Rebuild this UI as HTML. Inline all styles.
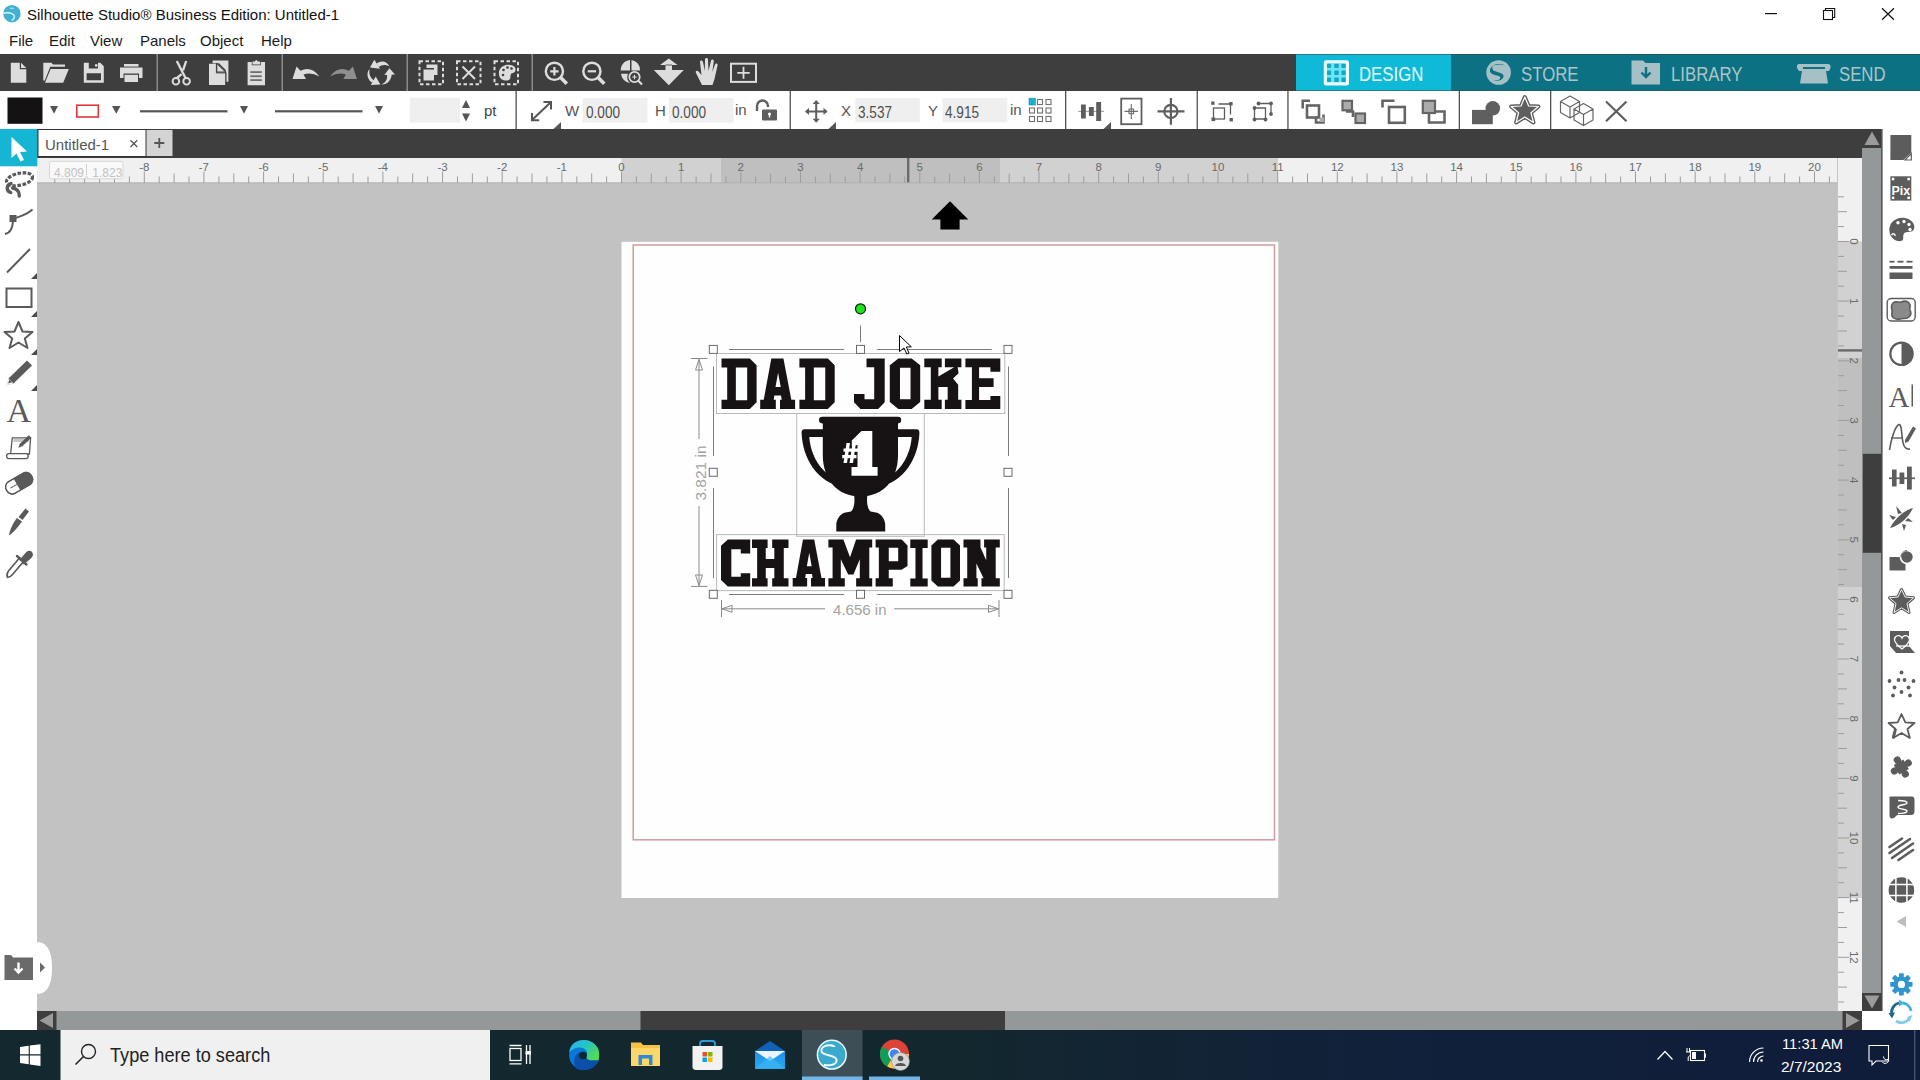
<!DOCTYPE html>
<html><head><meta charset="utf-8">
<style>
*{margin:0;padding:0;box-sizing:border-box}
html,body{width:1920px;height:1080px;overflow:hidden;background:#fff;font-family:"Liberation Sans",sans-serif}
.a{position:absolute}
.t{position:absolute;white-space:pre;line-height:1;transform-origin:0 0}
#tb1{left:0;top:54px;width:1920px;height:37px;background:#3d3e3d}
#tabs{left:37px;top:129px;width:1845px;height:29px;background:#3d3e3d}
#ruler{left:37px;top:158px;width:1801px;height:25px;background:#f0f0f0}
#canvas{left:37px;top:183px;width:1801px;height:828px;background:#c1c2c1}
#vruler{left:1837px;top:158px;width:25px;height:853px;background:#f0f0f0}
#vscroll{left:1862px;top:148px;width:19px;height:845px;background:#959898}
#hscroll{left:37px;top:1011px;width:1825px;height:19px;background:#959898}
#taskbar{left:0;top:1030px;width:1920px;height:50px;background:linear-gradient(90deg,#13282f 0%,#13272f 50%,#11213a 72%,#0f1c3a 100%)}
.fld{position:absolute;background:#efefef}
.menu{font-size:15px;color:#1a1a1a;top:33px}
.fv{font-size:16px;color:#505050;transform:scaleX(0.85)}
.lab{font-size:15px;color:#555}
</style></head><body>
<!-- title -->
<div class="t" style="left:27px;top:7px;font-size:15px;color:#111">Silhouette Studio® Business Edition: Untitled-1</div>
<div class="t menu" style="left:9px">File</div>
<div class="t menu" style="left:49px">Edit</div>
<div class="t menu" style="left:90px">View</div>
<div class="t menu" style="left:140px">Panels</div>
<div class="t menu" style="left:200px">Object</div>
<div class="t menu" style="left:261px">Help</div>
<div id="tb1" class="a"></div>
<div id="tabs" class="a"></div>
<div id="ruler" class="a"></div>
<div id="canvas" class="a"></div>
<div id="vruler" class="a"></div>
<div class="a" style="left:1862px;top:129px;width:20px;height:882px;background:#3d3e3d"></div>
<div id="vscroll" class="a"></div>
<div id="hscroll" class="a"></div>
<div id="taskbar" class="a"></div>
<svg class="a" style="left:0;top:0" width="1920" height="1080" viewBox="0 0 1920 1080">
<!-- title logo -->
<circle cx="11.9" cy="13.7" r="8.7" fill="#43b0d0"/>
<path d="M3.6,13.3 C6,12.3 10.5,12.6 13.2,14.3 C15.2,15.6 14.6,18.6 12.2,20.2" fill="none" stroke="#c8f6ff" stroke-width="1.5" stroke-linecap="round"/>
<path d="M10.5,8.4 C11.5,8 12.5,8.1 13.2,8.6" fill="none" stroke="#9be6f8" stroke-width="1.2" stroke-linecap="round"/>
<!-- window controls -->
<rect x="1765" y="13" width="12" height="1.2" fill="#111"/>
<rect x="1823.5" y="10.5" width="9" height="9" fill="none" stroke="#111" stroke-width="1.1"/>
<path d="M1825.5,10.5 V8.5 H1834.7 V17.5 H1832.5" fill="none" stroke="#111" stroke-width="1.1"/>
<path d="M1882,8.2 L1894,19.8 M1894,8.2 L1882,19.8" stroke="#111" stroke-width="1.2"/>
<!-- toolbar1 separators -->
<g fill="#8a8b8a">
<rect x="156.5" y="54" width="1.5" height="37"/>
<rect x="281.5" y="54" width="1.5" height="37"/>
<rect x="406.5" y="54" width="1.5" height="37"/>
<rect x="531.5" y="54" width="1.5" height="37"/>
</g>
<!-- toolbar1 icons -->
<g fill="#dcdddc">
<path d="M10.8,62.8 H19.8 V69.2 H26.3 V82.8 H10.8 Z"/>
<path d="M21,62.8 L26.3,68 H21 Z"/>
<path d="M43.3,62.8 H51.5 L53,64.6 H65 V66.8 H50.2 L44.8,80.5 H43.3 Z"/>
<path d="M50.6,69 H68.8 L63.2,82.8 H45 Z"/>
<path d="M83.8,62.8 H88.8 V68.5 H98 V62.8 H100.3 L103.8,66.3 V82.8 H83.8 Z M86.6,73.2 V80.3 H101 V73.2 Z" fill-rule="evenodd"/>
<circle cx="96.2" cy="65.4" r="1.3"/>
<rect x="124" y="64" width="14.5" height="2.6"/>
<path d="M120,67.4 H142.5 V78 H139 V73.5 H123.5 V78 H120 Z"/>
<rect x="124.5" y="74.8" width="13.5" height="7.2"/>
<!-- cut -->
<path d="M176.8,61 L185.5,78" stroke="#dcdddc" stroke-width="2.3" fill="none"/>
<path d="M186.2,61 L183,70.3 M181.6,74.2 L177,78" stroke="#dcdddc" stroke-width="2.3" fill="none"/>
<circle cx="175.9" cy="81.3" r="3.3" fill="none" stroke="#dcdddc" stroke-width="1.9"/>
<circle cx="186.6" cy="81.3" r="3.3" fill="none" stroke="#dcdddc" stroke-width="1.9"/>
<!-- copy -->
<path d="M212.6,60.4 H228.4 V81.7 H225.8 V70 L219,63.2 H212.6 Z"/>
<path d="M209,63.7 H216.4 V72.4 H225.3 V85 H209 Z"/>
<path d="M217.3,63.7 L225.3,71.6 H217.3 Z"/>
<path d="M216.4,63.2 V72.9 H226 M216.4,63.2 L226,72.5 V85.5" stroke="#3d3e3d" stroke-width="1" fill="none"/>
<!-- paste -->
<path d="M247.6,62 H251.8 V65.2 H260.8 V62 H265 V85.2 H247.6 Z"/>
<path d="M252.5,61.5 H254.8 Q256.3,58.5 257.8,61.5 H260.1 V64.5 H252.5 Z"/>
<g fill="#6e6f6e"><rect x="250.3" y="71.2" width="11.5" height="1.8"/><rect x="250.3" y="75.3" width="11.5" height="1.8"/><rect x="250.3" y="79.2" width="11.5" height="1.8"/></g>
<!-- undo -->
<path d="M292.5,79 L296.5,66.5 L300.5,70.8 Q311,65.5 319.4,76.5 Q311,71.5 303.5,74.5 L306,79 Z"/>
</g>
<path d="M356.9,79 L352.9,66.5 L348.9,70.8 Q338.4,65.5 330,76.5 Q338.4,71.5 345.9,74.5 L343.4,79 Z" fill="#8e8f8e"/>
<!-- rotate -->
<g fill="#dcdddc">
<path d="M374.3,59.8 L370,67.6 L380,68.8 Z"/>
<path d="M376.5,63.5 C381,60.5 386.5,60.5 389.5,66.5 C386,64.2 381.5,64.5 378.8,67 Z"/>
<path d="M389.4,68.2 L384.3,75 L395,74.6 Z"/>
<path d="M386.8,74 C388,79 386,82.5 381.5,84.4 C385,84.8 391,82.5 391.8,74 Z"/>
<path d="M380.4,84.4 L370.8,84.9 L375.7,76.4 Z"/>
<path d="M374.2,80.5 C370.2,78 368.6,73.5 369.6,69 C366.6,71.5 366.4,78.5 371.8,82.6 Z"/>
</g>
<!-- group dashed boxes -->
<g fill="none" stroke="#dcdddc" stroke-width="2" stroke-dasharray="3.5,2.5">
<rect x="419.5" y="61.2" width="23.5" height="23"/>
<rect x="457" y="61.2" width="23.5" height="23"/>
<rect x="494.5" y="61.2" width="23.5" height="23"/>
</g>
<g fill="#dcdddc">
<path d="M426.5,64.5 H437.5 V75 H434 V68 H426.5 Z"/>
<rect x="423.5" y="69.5" width="10.5" height="11"/>
</g>
<path d="M462.5,66.5 L475,79 M475,66.5 L462.5,79" stroke="#dcdddc" stroke-width="2"/>
<path d="M499,74.5 C498,66 507,63.5 512.5,65.5 C517,67 516,72.5 513,73 C509.5,73.5 511,77 510,79 C508,82 499.5,81 499,74.5 Z" fill="#dcdddc"/>
<g fill="#3d3e3d"><circle cx="503.5" cy="70" r="1.3"/><circle cx="507.5" cy="67.5" r="1.3"/><circle cx="511.5" cy="68.5" r="1.3"/><circle cx="503" cy="75" r="1.3"/></g>
<!-- zoom in/out -->
<g fill="none" stroke="#dcdddc">
<circle cx="554.4" cy="71.3" r="8.6" stroke-width="2.4"/>
<path d="M560.6,77.5 L566.8,83.7" stroke-width="3.6"/>
<path d="M550.2,71.3 H558.6 M554.4,67.1 V75.5" stroke-width="2.2"/>
<circle cx="591.9" cy="71.3" r="8.6" stroke-width="2.4"/>
<path d="M598.1,77.5 L604.3,83.7" stroke-width="3.6"/>
<path d="M587.7,71.3 H596.1" stroke-width="2.2"/>
</g>
<!-- zoom selection -->
<path d="M621,72 A10,10 0 0 1 630,60 V70.5 H621 Z M631.5,60 A10,10 0 0 1 640,70.5 H631.5 Z M621,73.8 H628 A8,8 0 0 0 630,83 A10,10 0 0 1 621,73.8 Z" fill="#dcdddc"/>
<circle cx="634.5" cy="77" r="5.2" fill="none" stroke="#dcdddc" stroke-width="1.8"/>
<path d="M638.3,80.8 L642,84.5" stroke="#dcdddc" stroke-width="2.2"/>
<path d="M632.2,77 H636.8 M634.5,74.7 V79.3" stroke="#dcdddc" stroke-width="1.2"/>
<!-- fit / move arrows -->
<path d="M668.8,58.4 L677.5,65 H672 V70 H683.8 L668.8,85.3 L653.8,70 H665.5 V65 H660 Z" fill="#dcdddc"/>
<path d="M665.5,65 H672" stroke="#3d3e3d" stroke-width="0.8"/>
<!-- hand -->
<path d="M702,85 L696,73 C695,71 697,70 698.5,71.5 L701.5,75 L700,62 C699.8,60 702.5,59.8 703,62 L704.8,71 L705,59.5 C705,57.5 708,57.5 708,59.5 L708.5,71 L711,60.8 C711.5,59 714,59.3 713.8,61.3 L712.3,72 L715,64.5 C715.6,62.8 718,63.3 717.6,65.2 L714.5,79 L712.5,85 Z" fill="#dcdddc"/>
<!-- add rect -->
<rect x="731" y="63.7" width="25" height="18.2" fill="none" stroke="#dcdddc" stroke-width="2"/>
<path d="M737.3,72.8 H749.7 M743.5,66.8 V78.8" stroke="#dcdddc" stroke-width="1.8"/>
<!-- mode tabs -->
<rect x="1296" y="54.5" width="155" height="36" fill="#0fbad8"/>
<rect x="1451" y="54.5" width="469" height="36" fill="#0c7283"/>
<rect x="1323.8" y="60.2" width="25.2" height="25.2" rx="2.5" fill="#effdff"/>
<rect x="1326.8" y="63.2" width="19.2" height="19.2" fill="#6fe6f8"/>
<g fill="#12a8c4">
<rect x="1327" y="63.8" width="4.2" height="4.2" rx="0.8"/><rect x="1334.2" y="63.8" width="4.6" height="4.2" rx="0.8"/><rect x="1341.4" y="63.8" width="4.3" height="4.2" rx="0.8"/>
<rect x="1327" y="70.6" width="4.2" height="4.4" rx="0.8"/><rect x="1334.2" y="70.6" width="4.6" height="4.4" rx="0.8"/><rect x="1341.4" y="70.6" width="4.3" height="4.4" rx="0.8"/>
<rect x="1327" y="77.6" width="4.2" height="4.3" rx="0.8"/><rect x="1334.2" y="77.6" width="4.6" height="4.3" rx="0.8"/><rect x="1341.4" y="77.6" width="4.3" height="4.3" rx="0.8"/>
</g>
<!-- store icon -->
<circle cx="1498.6" cy="72.5" r="12.3" fill="#a7c0c5"/>
<path d="M1505,65.5 C1499,62.5 1491,64.5 1492.5,69 C1493.5,72.5 1502.5,71.8 1503.5,75.5 C1504.3,78.8 1499,82 1493,80.5 C1498.5,80.8 1501,79 1500,77 C1499,75 1491,75.5 1490,71.5 C1489,66 1497,62.5 1505,65.5 Z" fill="#0c7283"/>
<!-- library icon -->
<path d="M1631.5,60.5 H1643 L1645.5,63 H1660 V84.5 H1631.5 Z" fill="#a7c0c5"/>
<path d="M1646,67 V76 M1641.5,72.5 L1646,77 L1650.5,72.5" stroke="#0c7283" stroke-width="2.4" fill="none"/>
<!-- send icon -->
<path d="M1799,64 H1828 Q1831,64 1830.5,68 L1829,71 H1826 L1828,83.5 H1800 L1802,71 H1799 L1797,68 Q1796.5,64 1799,64 Z" fill="#a7c0c5"/>
<rect x="1803" y="67" width="22" height="2" fill="#0c7283"/>
<!-- toolbar2 -->
<rect x="7.5" y="97.5" width="35" height="26.3" fill="#141213"/>
<g fill="#555">
<path d="M50,106 H58 L54,113.8 Z"/>
<path d="M112,106 H120.5 L116.2,113.8 Z"/>
<path d="M240,106 H248 L244,113.8 Z"/>
<path d="M375,106 H383 L379,113.8 Z"/>
<path d="M462,108 H470 L466,100 Z"/>
<path d="M462,113.5 H470 L466,121.5 Z"/>
</g>
<rect x="76.8" y="105.2" width="21.5" height="11.8" fill="none" stroke="#e0373a" stroke-width="1.6"/>
<rect x="140" y="110.2" width="87.5" height="2.2" fill="#555"/>
<rect x="275" y="110.2" width="87.5" height="2.2" fill="#555"/>
<rect x="410" y="97.6" width="50" height="25" fill="#efefef"/>
<g fill="#505050">
<rect x="515.5" y="91" width="1.3" height="38"/>
<rect x="789.6" y="91" width="1.3" height="38"/>
<rect x="1065" y="91" width="1.3" height="38"/>
<rect x="1196.6" y="91" width="1.3" height="38"/>
<rect x="1287.3" y="91" width="1.3" height="38"/>
<rect x="1458.7" y="91" width="1.3" height="38"/>
<rect x="1550" y="91" width="1.3" height="38"/>
</g>
<!-- resize arrow -->
<g stroke="#555" stroke-width="2" fill="none">
<path d="M532.5,119.5 L550.5,102.5"/>
<path d="M532,113 V120.2 H539.2 M543.5,102 H551 V109.5"/>
</g>
<g fill="#555">
<path d="M553.5,129 L561,122 V129 Z"/>
<path d="M828.5,129 L836,122 V129 Z"/>
<path d="M1103.5,129 L1111,122 V129 Z"/>
</g>
<rect x="582.5" y="98" width="65" height="24.6" fill="#efefef"/>
<rect x="668.9" y="98" width="64.7" height="24.6" fill="#efefef"/>
<rect x="855.2" y="98" width="64.6" height="24.2" fill="#efefef"/>
<rect x="942.4" y="98" width="64.9" height="24.2" fill="#efefef"/>
<!-- lock -->
<path d="M757,111 V106 A5.5,5.5 0 0 1 768,106 V107" fill="none" stroke="#5e5e5e" stroke-width="2.4"/>
<rect x="762" y="109.5" width="15" height="11" rx="1" fill="#5e5e5e"/>
<circle cx="769.5" cy="114" r="1.6" fill="#fff"/><rect x="768.9" y="114" width="1.2" height="3.5" fill="#fff"/>
<!-- move -->
<g stroke="#5e5e5e" stroke-width="2" fill="none">
<path d="M806,111.4 H826.5 M816.2,101 V121.8"/>
</g>
<g fill="#5e5e5e">
<path d="M805,111.4 L809,107.8 V115 Z"/><path d="M827.5,111.4 L823.5,107.8 V115 Z"/>
<path d="M816.2,100 L812.6,104 H819.8 Z"/><path d="M816.2,122.8 L812.6,118.8 H819.8 Z"/>
</g>
<!-- 3x3 grid -->
<g fill="none" stroke="#707070" stroke-width="1.1">
<rect x="1037.5" y="99.5" width="5" height="5"/><rect x="1046" y="99.5" width="5" height="5"/>
<rect x="1029.5" y="108" width="5" height="5"/><rect x="1037.5" y="108" width="5" height="5"/><rect x="1046" y="108" width="5" height="5"/>
<rect x="1029.5" y="116.5" width="5" height="5"/><rect x="1037.5" y="116.5" width="5" height="5"/><rect x="1046" y="116.5" width="5" height="5"/>
</g>
<rect x="1029" y="98.2" width="6.3" height="6.8" fill="#1ab0cf" stroke="#0e8aa5" stroke-width="0.6"/>
<!-- align -->
<g fill="#5e5e5e">
<rect x="1078" y="110.8" width="26" height="1.2" fill="#aaa"/>
<rect x="1081" y="104.5" width="4.8" height="14"/>
<rect x="1088.9" y="107" width="4.9" height="9"/>
<rect x="1096.2" y="102" width="4.9" height="19"/>
</g>
<rect x="1121.2" y="98.6" width="20.3" height="25.6" fill="none" stroke="#5e5e5e" stroke-width="1.8"/>
<g stroke="#6e6e6e" stroke-width="1.1" fill="none">
<path d="M1124.5,111.4 H1138 M1131.3,104 V119"/>
<rect x="1129" y="109.1" width="4.6" height="4.6"/>
</g>
<g stroke="#5e5e5e" fill="none">
<circle cx="1170.9" cy="111.4" r="6.6" stroke-width="2.2"/>
<path d="M1157.5,111.4 H1184.5 M1170.9,98 V124.8" stroke-width="2.2"/>
</g>
<!-- transform icons -->
<g fill="none" stroke="#5e5e5e" stroke-width="1.3">
<rect x="1213.5" y="108" width="11" height="11"/>
<path d="M1218.5,104 H1230.5 V114.5"/>
<path d="M1254.5,108 H1265.5 V119 H1254.5 Z"/>
<path d="M1258.5,103.5 H1271 V114"/>
</g>
<g fill="#5e5e5e">
<rect x="1211.2" y="101.5" width="3.3" height="3.3"/><rect x="1229.2" y="102" width="3.4" height="3.4"/><rect x="1211.5" y="117.5" width="3.6" height="3.6"/><rect x="1229.5" y="118" width="3.4" height="3.4"/>
<circle cx="1254.5" cy="108" r="1.9"/><circle cx="1258.5" cy="103.5" r="1.9"/><circle cx="1271" cy="103.5" r="1.9"/><circle cx="1271" cy="114" r="1.9"/><circle cx="1254.5" cy="119.5" r="1.9"/><circle cx="1265.5" cy="119.5" r="1.9"/>
</g>
<!-- arrange icons -->
<g fill="none" stroke="#646464" stroke-width="2.6">
<path d="M1302.7,108.5 V100.8 H1310 M1316,116.5 V122.5 H1323.5 V114.5"/>
<rect x="1307" y="105.5" width="12" height="12"/>
<path d="M1347,110 V104.5 M1353,117 V111.5 H1346"/>
<path d="M1382.5,107.5 V100.8 H1394.5"/>
<rect x="1389" y="107" width="15.8" height="15.8"/>
<path d="M1430.5,111.5 H1444.5 V122.5 H1429 V114"/>
</g>
<g fill="#ababab" stroke="#646464" stroke-width="2.2">
<rect x="1342.5" y="100.8" width="9.5" height="9.5"/>
<rect x="1355.5" y="113.5" width="9.5" height="9.5"/>
<rect x="1422.8" y="100.8" width="12.2" height="12.2"/>
</g>
<rect x="1319.5" y="117.5" width="4.5" height="4.5" fill="#ababab"/>
<!-- weld, star -->
<g fill="#5f5f5f">
<rect x="1472" y="109.9" width="20.8" height="14.3"/>
<circle cx="1492.8" cy="108.3" r="7.3"/>
</g>
<path d="M1524.8,97 L1528.6,106 L1538.5,106.5 L1531,112.8 L1533.5,122.5 L1524.8,117 L1516.1,122.5 L1518.6,112.8 L1511.1,106.5 L1521,106 Z" fill="#5f5f5f" stroke="#5f5f5f" stroke-width="4" stroke-linejoin="round"/>
<path d="M1524.8,97 L1528.6,106 L1538.5,106.5 L1531,112.8 L1533.5,122.5 L1524.8,117 L1516.1,122.5 L1518.6,112.8 L1511.1,106.5 L1521,106 Z" fill="#5f5f5f" stroke="#fff" stroke-width="1.2" stroke-linejoin="round"/>
<path d="M1524.8,101.5 L1527.5,107.8 L1534.2,108.2 L1529.2,112.5 L1530.8,119 L1524.8,115.4 L1518.8,119 L1520.4,112.5 L1515.4,108.2 L1522.1,107.8 Z" fill="#5f5f5f"/>
<!-- cubes -->
<g fill="none" stroke="#666" stroke-width="1.2" stroke-linejoin="round">
<path d="M1560.5,101.5 L1570,96 L1579.5,101.5 V112.5 L1570,118 L1560.5,112.5 Z M1560.5,101.5 L1570,107 L1579.5,101.5 M1570,107 V118"/>
<path d="M1574,109 L1583.5,103.5 L1593,109 V120 L1583.5,125.5 L1574,120 Z M1574,109 L1583.5,114.5 L1593,109 M1583.5,114.5 V125.5"/>
</g>
<path d="M1606,101.5 L1626.5,121.2 M1626.5,101.5 L1606,121.2" stroke="#5e5e5e" stroke-width="2.2"/>
<!-- tab bar content -->
<rect x="38" y="129.5" width="108" height="27" fill="#fff" stroke="#333" stroke-width="1"/>
<rect x="146.5" y="130" width="26" height="26" fill="#d4d4d4"/>
<path d="M154.3,143 H164.3 M159.3,138 V148" stroke="#555" stroke-width="1.8"/>
<path d="M130.5,140.3 L137.3,147 M137.3,140.3 L130.5,147" stroke="#555" stroke-width="1.3"/>
<!-- select tool highlight -->
<rect x="0" y="129" width="37.3" height="37.3" fill="#17b5d4"/>
<path d="M11.5,137 L11.5,158 L16.5,153.5 L20.5,161.5 L24,160 L20,152 L27,151.5 Z" fill="#fff"/>
<rect x="621.5" y="158" width="656.5" height="25" fill="#d0d1d0"/>
<rect x="721" y="158" width="279" height="25" fill="#bebfbe"/>
<rect x="907" y="158" width="2.4" height="25" fill="#6a6b6a"/>
<rect x="37" y="182.3" width="1801" height="1" fill="#b0b1b0"/>
<path d="M54.8,173.5V183M69.7,176.5V183M84.6,171.5V183M99.6,176.5V183M114.5,173.5V183M129.4,176.5V183M144.3,171.5V183M159.2,176.5V183M174.1,173.5V183M189.0,176.5V183M203.9,171.5V183M218.9,176.5V183M233.8,173.5V183M248.7,176.5V183M263.6,171.5V183M278.5,176.5V183M293.4,173.5V183M308.3,176.5V183M323.2,171.5V183M338.2,176.5V183M353.1,173.5V183M368.0,176.5V183M382.9,171.5V183M397.8,176.5V183M412.7,173.5V183M427.6,176.5V183M442.6,171.5V183M457.5,176.5V183M472.4,173.5V183M487.3,176.5V183M502.2,171.5V183M517.1,176.5V183M532.0,173.5V183M546.9,176.5V183M561.9,171.5V183M576.8,176.5V183M591.7,173.5V183M606.6,176.5V183M621.5,171.5V183M636.4,176.5V183M651.3,173.5V183M666.2,176.5V183M681.1,171.5V183M696.1,176.5V183M711.0,173.5V183M725.9,176.5V183M740.8,171.5V183M755.7,176.5V183M770.6,173.5V183M785.5,176.5V183M800.5,171.5V183M815.4,176.5V183M830.3,173.5V183M845.2,176.5V183M860.1,171.5V183M875.0,176.5V183M889.9,173.5V183M904.8,176.5V183M919.8,171.5V183M934.7,176.5V183M949.6,173.5V183M964.5,176.5V183M979.4,171.5V183M994.3,176.5V183M1009.2,173.5V183M1024.1,176.5V183M1039.0,171.5V183M1054.0,176.5V183M1068.9,173.5V183M1083.8,176.5V183M1098.7,171.5V183M1113.6,176.5V183M1128.5,173.5V183M1143.4,176.5V183M1158.3,171.5V183M1173.3,176.5V183M1188.2,173.5V183M1203.1,176.5V183M1218.0,171.5V183M1232.9,176.5V183M1247.8,173.5V183M1262.7,176.5V183M1277.7,171.5V183M1292.6,176.5V183M1307.5,173.5V183M1322.4,176.5V183M1337.3,171.5V183M1352.2,176.5V183M1367.1,173.5V183M1382.0,176.5V183M1396.9,171.5V183M1411.9,176.5V183M1426.8,173.5V183M1441.7,176.5V183M1456.6,171.5V183M1471.5,176.5V183M1486.4,173.5V183M1501.3,176.5V183M1516.2,171.5V183M1531.2,176.5V183M1546.1,173.5V183M1561.0,176.5V183M1575.9,171.5V183M1590.8,176.5V183M1605.7,173.5V183M1620.6,176.5V183M1635.5,171.5V183M1650.5,176.5V183M1665.4,173.5V183M1680.3,176.5V183M1695.2,171.5V183M1710.1,176.5V183M1725.0,173.5V183M1739.9,176.5V183M1754.8,171.5V183M1769.8,176.5V183M1784.7,173.5V183M1799.6,176.5V183M1814.5,171.5V183M1829.4,176.5V183" stroke="#9c9d9c" stroke-width="1" fill="none"/>
<text x="144.3" y="171" text-anchor="middle" font-size="11.5" fill="#6a6a6a" font-family="Liberation Sans">-8</text>
<text x="203.9" y="171" text-anchor="middle" font-size="11.5" fill="#6a6a6a" font-family="Liberation Sans">-7</text>
<text x="263.6" y="171" text-anchor="middle" font-size="11.5" fill="#6a6a6a" font-family="Liberation Sans">-6</text>
<text x="323.2" y="171" text-anchor="middle" font-size="11.5" fill="#6a6a6a" font-family="Liberation Sans">-5</text>
<text x="382.9" y="171" text-anchor="middle" font-size="11.5" fill="#6a6a6a" font-family="Liberation Sans">-4</text>
<text x="442.6" y="171" text-anchor="middle" font-size="11.5" fill="#6a6a6a" font-family="Liberation Sans">-3</text>
<text x="502.2" y="171" text-anchor="middle" font-size="11.5" fill="#6a6a6a" font-family="Liberation Sans">-2</text>
<text x="561.9" y="171" text-anchor="middle" font-size="11.5" fill="#6a6a6a" font-family="Liberation Sans">-1</text>
<text x="621.5" y="171" text-anchor="middle" font-size="11.5" fill="#6a6a6a" font-family="Liberation Sans">0</text>
<text x="681.1" y="171" text-anchor="middle" font-size="11.5" fill="#6a6a6a" font-family="Liberation Sans">1</text>
<text x="740.8" y="171" text-anchor="middle" font-size="11.5" fill="#6a6a6a" font-family="Liberation Sans">2</text>
<text x="800.5" y="171" text-anchor="middle" font-size="11.5" fill="#6a6a6a" font-family="Liberation Sans">3</text>
<text x="860.1" y="171" text-anchor="middle" font-size="11.5" fill="#6a6a6a" font-family="Liberation Sans">4</text>
<text x="919.8" y="171" text-anchor="middle" font-size="11.5" fill="#6a6a6a" font-family="Liberation Sans">5</text>
<text x="979.4" y="171" text-anchor="middle" font-size="11.5" fill="#6a6a6a" font-family="Liberation Sans">6</text>
<text x="1039.0" y="171" text-anchor="middle" font-size="11.5" fill="#6a6a6a" font-family="Liberation Sans">7</text>
<text x="1098.7" y="171" text-anchor="middle" font-size="11.5" fill="#6a6a6a" font-family="Liberation Sans">8</text>
<text x="1158.3" y="171" text-anchor="middle" font-size="11.5" fill="#6a6a6a" font-family="Liberation Sans">9</text>
<text x="1218.0" y="171" text-anchor="middle" font-size="11.5" fill="#6a6a6a" font-family="Liberation Sans">10</text>
<text x="1277.7" y="171" text-anchor="middle" font-size="11.5" fill="#6a6a6a" font-family="Liberation Sans">11</text>
<text x="1337.3" y="171" text-anchor="middle" font-size="11.5" fill="#6a6a6a" font-family="Liberation Sans">12</text>
<text x="1396.9" y="171" text-anchor="middle" font-size="11.5" fill="#6a6a6a" font-family="Liberation Sans">13</text>
<text x="1456.6" y="171" text-anchor="middle" font-size="11.5" fill="#6a6a6a" font-family="Liberation Sans">14</text>
<text x="1516.2" y="171" text-anchor="middle" font-size="11.5" fill="#6a6a6a" font-family="Liberation Sans">15</text>
<text x="1575.9" y="171" text-anchor="middle" font-size="11.5" fill="#6a6a6a" font-family="Liberation Sans">16</text>
<text x="1635.5" y="171" text-anchor="middle" font-size="11.5" fill="#6a6a6a" font-family="Liberation Sans">17</text>
<text x="1695.2" y="171" text-anchor="middle" font-size="11.5" fill="#6a6a6a" font-family="Liberation Sans">18</text>
<text x="1754.8" y="171" text-anchor="middle" font-size="11.5" fill="#6a6a6a" font-family="Liberation Sans">19</text>
<text x="1814.5" y="171" text-anchor="middle" font-size="11.5" fill="#6a6a6a" font-family="Liberation Sans">20</text>
<rect x="1837.5" y="241.5" width="24.5" height="656.5" fill="#d0d1d0"/>
<rect x="1837.5" y="358" width="24.5" height="229" fill="#bebfbe"/>
<rect x="1837.5" y="349.2" width="24.5" height="2.4" fill="#6a6b6a"/>
<rect x="1837" y="158" width="1" height="853" fill="#c4c5c4"/>
<path d="M1838,196.8H1844M1838,211.7H1847M1838,226.6H1844M1838,241.5H1849M1838,256.4H1844M1838,271.3H1847M1838,286.2H1844M1838,301.1H1849M1838,316.1H1844M1838,331.0H1847M1838,345.9H1844M1838,360.8H1849M1838,375.7H1844M1838,390.6H1847M1838,405.5H1844M1838,420.4H1849M1838,435.4H1844M1838,450.3H1847M1838,465.2H1844M1838,480.1H1849M1838,495.0H1844M1838,509.9H1847M1838,524.8H1844M1838,539.8H1849M1838,554.7H1844M1838,569.6H1847M1838,584.5H1844M1838,599.4H1849M1838,614.3H1844M1838,629.2H1847M1838,644.1H1844M1838,659.0H1849M1838,674.0H1844M1838,688.9H1847M1838,703.8H1844M1838,718.7H1849M1838,733.6H1844M1838,748.5H1847M1838,763.4H1844M1838,778.4H1849M1838,793.3H1844M1838,808.2H1847M1838,823.1H1844M1838,838.0H1849M1838,852.9H1844M1838,867.8H1847M1838,882.7H1844M1838,897.6H1849M1838,912.6H1844M1838,927.5H1847M1838,942.4H1844M1838,957.3H1849M1838,972.2H1844M1838,987.1H1847M1838,1002.0H1844" stroke="#9c9d9c" stroke-width="1" fill="none"/>
<text transform="translate(1850,241.5) rotate(90)" x="0" y="0" text-anchor="middle" font-size="11.5" fill="#6a6a6a" font-family="Liberation Sans">0</text>
<text transform="translate(1850,301.1) rotate(90)" x="0" y="0" text-anchor="middle" font-size="11.5" fill="#6a6a6a" font-family="Liberation Sans">1</text>
<text transform="translate(1850,360.8) rotate(90)" x="0" y="0" text-anchor="middle" font-size="11.5" fill="#6a6a6a" font-family="Liberation Sans">2</text>
<text transform="translate(1850,420.4) rotate(90)" x="0" y="0" text-anchor="middle" font-size="11.5" fill="#6a6a6a" font-family="Liberation Sans">3</text>
<text transform="translate(1850,480.1) rotate(90)" x="0" y="0" text-anchor="middle" font-size="11.5" fill="#6a6a6a" font-family="Liberation Sans">4</text>
<text transform="translate(1850,539.8) rotate(90)" x="0" y="0" text-anchor="middle" font-size="11.5" fill="#6a6a6a" font-family="Liberation Sans">5</text>
<text transform="translate(1850,599.4) rotate(90)" x="0" y="0" text-anchor="middle" font-size="11.5" fill="#6a6a6a" font-family="Liberation Sans">6</text>
<text transform="translate(1850,659.0) rotate(90)" x="0" y="0" text-anchor="middle" font-size="11.5" fill="#6a6a6a" font-family="Liberation Sans">7</text>
<text transform="translate(1850,718.7) rotate(90)" x="0" y="0" text-anchor="middle" font-size="11.5" fill="#6a6a6a" font-family="Liberation Sans">8</text>
<text transform="translate(1850,778.4) rotate(90)" x="0" y="0" text-anchor="middle" font-size="11.5" fill="#6a6a6a" font-family="Liberation Sans">9</text>
<text transform="translate(1850,838.0) rotate(90)" x="0" y="0" text-anchor="middle" font-size="11.5" fill="#6a6a6a" font-family="Liberation Sans">10</text>
<text transform="translate(1850,897.6) rotate(90)" x="0" y="0" text-anchor="middle" font-size="11.5" fill="#6a6a6a" font-family="Liberation Sans">11</text>
<text transform="translate(1850,957.3) rotate(90)" x="0" y="0" text-anchor="middle" font-size="11.5" fill="#6a6a6a" font-family="Liberation Sans">12</text>
<rect x="49.5" y="161.3" width="73.5" height="17.5" rx="2" fill="#f8f9f8" stroke="#d6d7d6" stroke-width="1"/>
<text x="54" y="176.5" font-family="Liberation Sans" font-size="12" fill="#c3c3c3">4.809</text>
<text x="92.3" y="176.5" font-family="Liberation Sans" font-size="12" fill="#c3c3c3">1.823</text>
<path d="M86.5,164 V175 M85,177 H88" stroke="#d0d0d0" stroke-width="1"/>
<!-- left tools -->
<g fill="none" stroke="#5a5a5a" stroke-width="2">
<!-- lasso -->
<ellipse cx="19.5" cy="179.3" rx="13.3" ry="6" transform="rotate(-12 19.5 179.3)" stroke-width="3.2" stroke-dasharray="3.6,1.5"/>
<path d="M11,183.5 C6,185.5 6,191 10.8,192.5" stroke-width="3.4" stroke-linecap="round"/>
<path d="M12.5,188 C16.5,188.5 19.5,191.5 19.3,196" stroke-width="3.4" stroke-linecap="round"/>
<!-- point edit -->
<path d="M5,234 C10,233 13,229 13,219 C17,217 25,216 32.5,209.5"/>
<!-- line -->
<path d="M7,272.5 L30,249"/>
<rect x="6.5" y="288.5" width="25" height="18.5"/>
<path d="M18.5,322 L22.5,331.5 L32.5,332 L24.8,338.5 L27.5,348 L18.5,342.5 L9.5,348 L12.2,338.5 L4.5,332 L14.5,331.5 Z" stroke-linejoin="round"/>
</g>
<rect x="9.5" y="215" width="7" height="7" fill="#5a5a5a"/>
<g fill="#4a4a4a">
<path d="M31,279 L37,273 V279 Z"/>
<path d="M31,317 L37,311 V317 Z"/>
<path d="M31,355 L37,349 V355 Z"/>
<path d="M31,391 L37,385 V391 Z"/>
</g>
<!-- pencil -->
<path d="M6.5,385.5 L9,378 L27,360.5 L32,365.5 L14,383 Z" fill="#5a5a5a"/>
<path d="M6.5,385.5 L9,378 L14,383 Z M8,383.5 L9.5,379.5 L12.2,382.2 Z" fill="#fff" fill-rule="evenodd"/>
<path d="M9,378 L14,383" stroke="#5a5a5a" stroke-width="1.2"/>
<!-- A -->
<text x="18.7" y="422.3" text-anchor="middle" font-family="Liberation Serif" font-size="34" fill="#5a5a5a">A</text>
<!-- doc sketch -->
<path d="M12.3,437.8 H30.6 L29.4,454 H10.6 Z" fill="#fff" stroke="#5a5a5a" stroke-width="1.3"/>
<rect x="13.5" y="439" width="15.8" height="3" fill="#c8c8c8"/>
<rect x="6.6" y="453.6" width="21.6" height="5" rx="2.4" fill="#fff" stroke="#5a5a5a" stroke-width="1.3"/>
<path d="M18.3,447.8 L19.8,443.8 L28.8,435.3 L31.3,437.8 L22.3,446.3 Z" fill="#5a5a5a"/>
<!-- eraser -->
<g transform="rotate(-30 19 483)">
<rect x="4" y="476" width="30" height="14.5" rx="6.5" fill="#5a5a5a"/>
<path d="M16.5,476.8 H10.5 C7,476.8 4.8,479.5 4.8,483.2 C4.8,487 7,489.7 10.5,489.7 H16.5 Z" fill="#fff"/>
<rect x="4.7" y="476.7" width="28.6" height="13.1" rx="6" fill="none" stroke="#5a5a5a" stroke-width="1.4"/>
<path d="M9,483.2 H16.5" stroke="#5a5a5a" stroke-width="1"/>
</g>
<!-- knife -->
<path d="M9,535.5 C10,528 14,522 17,518 L22,521.5 C18,527 13,533 9,535.5 Z" fill="#5a5a5a"/>
<path d="M18.5,517 L25.5,508.5 L29,511.5 L22.5,520 Z" fill="#5a5a5a"/>
<!-- eyedropper -->
<path d="M7.5,577.5 C6.5,575 7,573 8.5,571 L19.5,558 L23.5,561.5 L12.5,574.5 C11,576.5 9.5,577.5 7.5,577.5 Z" fill="none" stroke="#5a5a5a" stroke-width="1.6"/>
<path d="M17,556 L26.5,564.5 M21,560 L27,553 C28.5,551.5 31,551.5 31.5,553.5 C32,555 31,557 29.5,558 L23.5,563" fill="#5a5a5a" stroke="#5a5a5a" stroke-width="2.4" stroke-linecap="round"/>
<!-- library tab bottom-left -->
<path d="M0,942 H37 C49,942 52,955 52,968 C52,981 49,994 37,994 H0 Z" fill="#fff"/>
<path d="M4.5,955 H11 L13,957.5 H33 V980 H4.5 Z" fill="#6a6a6a"/>
<path d="M18.5,962.5 V972 M14.5,968.5 L18.5,972.5 L22.5,968.5" stroke="#fff" stroke-width="2.4" fill="none"/>
<path d="M40,962.5 L45,967.5 L40,972.5 Z" fill="#6a6a6a"/>
<!-- right panel -->
<rect x="1881.5" y="129" width="1.2" height="882" fill="#6a6a6a"/>
<g fill="#5c5c5c">
<path d="M1890.4,135 H1911.3 V152.5 L1903.5,160 H1890.4 Z"/>
<path d="M1905,160 L1911.3,153.5 V160 Z" fill="none" stroke="#5c5c5c" stroke-width="1.2"/>
<rect x="1890.4" y="176.3" width="20.9" height="24.3"/>
</g>
<text x="1900.8" y="194.5" text-anchor="middle" font-family="Liberation Sans" font-size="12.5" font-weight="bold" fill="#fff">Pix</text>
<g fill="#fff"><rect x="1891.8" y="177.8" width="2.5" height="2.5"/><rect x="1907.4" y="177.8" width="2.5" height="2.5"/><rect x="1891.8" y="196.6" width="2.5" height="2.5"/><rect x="1907.4" y="196.6" width="2.5" height="2.5"/></g>
<!-- palette -->
<path d="M1889.5,232 C1888,222 1897,216.5 1905,218 C1913,219.5 1916,226 1913.5,230 C1911,233.5 1906,230.5 1904,233.5 C1902,237 1905,240 1901,241 C1896,242 1890.5,238 1889.5,232 Z" fill="#5c5c5c"/>
<g fill="#fff"><circle cx="1898" cy="222.8" r="1.7"/><circle cx="1904" cy="221.5" r="1.7"/><circle cx="1909" cy="224.5" r="1.7"/><circle cx="1910" cy="229.5" r="1.7"/></g>
<path d="M1891.5,235 C1893,233 1895.5,233.5 1895,236" fill="none" stroke="#fff" stroke-width="1.4"/>
<!-- lines -->
<g fill="#5c5c5c">
<rect x="1889.5" y="260.8" width="5" height="1.8"/><rect x="1897.5" y="260.8" width="6" height="1.8"/><rect x="1906.5" y="260.8" width="6" height="1.8"/>
<rect x="1889.5" y="266" width="23" height="2.8"/>
<rect x="1889.5" y="272.5" width="23" height="6.5"/>
</g>
<!-- offset -->
<rect x="1887.2" y="298.5" width="28" height="22.5" rx="4" fill="none" stroke="#5c5c5c" stroke-width="1.4"/>
<path d="M1893,303 C1896,300.5 1899,303 1901.2,302 C1903.5,301 1906.5,300.5 1909,303 C1911.5,305.5 1909,308 1910,310 C1911,312 1911.5,315 1909,317 C1906.5,319.5 1903.5,318 1901.2,318.8 C1899,319.5 1896,320 1893,317.5 C1890.5,315 1892.5,312 1892,310 C1891.5,308 1890.5,305.5 1893,303 Z" fill="#8a8a8a" stroke="#5c5c5c" stroke-width="1.6"/>
<!-- half circle -->
<circle cx="1901.5" cy="353.8" r="11.2" fill="#fff" stroke="#5c5c5c" stroke-width="2.2"/>
<path d="M1901.5,342.6 A11.2,11.2 0 0 1 1901.5,365 Z" fill="#5c5c5c"/>
<!-- A| -->
<text x="1899" y="406.5" text-anchor="middle" font-family="Liberation Serif" font-size="29" fill="#5c5c5c">A</text>
<rect x="1911.5" y="384.5" width="1.5" height="22" fill="#5c5c5c"/>
<!-- text on path -->
<path d="M1889.5,450 C1891,440 1895,426 1899,424.5 C1901,424 1901.5,430 1902,436 C1903,446 1905,450 1910,449" fill="none" stroke="#5c5c5c" stroke-width="1.6"/>
<path d="M1891,438 H1902" stroke="#5c5c5c" stroke-width="1.4"/>
<path d="M1905,440 L1913,426.5 L1916,428.5 L1908.5,441.5 L1905,443 Z" fill="#5c5c5c"/>
<!-- align -->
<g fill="#5c5c5c">
<rect x="1889" y="477.5" width="26" height="1.6"/>
<rect x="1892" y="469.5" width="4.6" height="17"/>
<rect x="1899.5" y="472.5" width="4.8" height="11.5"/>
<rect x="1907" y="466.6" width="4.8" height="23"/>
</g>
<!-- knife/scatter -->
<path d="M1890,528 C1895,518 1905,510 1913,508 C1909,517 1899,526 1890,528 Z" fill="#5c5c5c"/>
<g fill="#5c5c5c">
<path d="M1896,506 L1902,513 L1898,514 Z"/><path d="M1889,515 L1896,517 L1893,520 Z"/>
<path d="M1913,522 L1905,521 L1908,518 Z"/><path d="M1904,531 L1902,524 L1906,525 Z"/>
</g>
<!-- replicate -->
<rect x="1889.5" y="557" width="16" height="13.5" fill="#5c5c5c"/>
<circle cx="1907" cy="557" r="6.5" fill="#5c5c5c" stroke="#fff" stroke-width="1.6"/>
<path d="M1901,557 A6.5,6.5 0 0 1 1907,550.5" fill="none" stroke="#5c5c5c" stroke-width="1"/>
<!-- star outlined filled -->
<path d="M1901.5,589.5 L1905,597 L1913.5,597.8 L1907,603.5 L1909,612.5 L1901.5,607.8 L1894,612.5 L1896,603.5 L1889.5,597.8 L1898,597 Z" fill="#5c5c5c" stroke="#5c5c5c" stroke-width="3" stroke-linejoin="round"/>
<path d="M1901.5,589.5 L1905,597 L1913.5,597.8 L1907,603.5 L1909,612.5 L1901.5,607.8 L1894,612.5 L1896,603.5 L1889.5,597.8 L1898,597 Z" fill="none" stroke="#fff" stroke-width="0.9" stroke-linejoin="round"/>
<!-- heart doc -->
<path d="M1890,631 H1909 V646 L1915,653 H1896 L1890,646 Z" fill="#5c5c5c"/>
<path d="M1902,649 C1895,643.5 1893,640 1895.3,637 C1897.5,634.6 1901,635.6 1902,638 C1903,635.6 1906.5,634.6 1908.7,637 C1911,640 1909,643.5 1902,649 Z" fill="#5c5c5c" stroke="#fff" stroke-width="1.3"/>
<path d="M1896,646 H1910" stroke="#fff" stroke-width="1.3"/>
<!-- dot star -->
<g fill="#5c5c5c">
<circle cx="1901.5" cy="672.5" r="1.9"/>
<circle cx="1898.5" cy="680" r="1.9"/><circle cx="1904.5" cy="680" r="1.9"/>
<circle cx="1889.5" cy="681" r="1.9"/><circle cx="1913.5" cy="681" r="1.9"/>
<circle cx="1894.5" cy="687.5" r="1.9"/><circle cx="1908.5" cy="687.5" r="1.9"/>
<circle cx="1901.5" cy="692" r="1.9"/>
<circle cx="1893" cy="695.5" r="1.9"/><circle cx="1910" cy="695.5" r="1.9"/>
</g>
<!-- outline star -->
<path d="M1901.5,714 L1905.3,722.3 L1914.5,723 L1907.5,729 L1909.8,738 L1901.5,733 L1893.2,738 L1895.5,729 L1888.5,723 L1897.7,722.3 Z" fill="#fff" stroke="#5c5c5c" stroke-width="1.8" stroke-linejoin="round"/>
<path d="M1893.2,738 L1895.5,729" stroke="#5c5c5c" stroke-width="3"/>
<!-- puzzle -->
<g transform="translate(1901.3,767) rotate(-30)" fill="#5c5c5c">
<rect x="-5.5" y="-5.5" width="11" height="11"/>
<circle cx="0" cy="-8" r="3.6"/><circle cx="8" cy="0" r="3.6"/><circle cx="0" cy="8" r="3.6"/><circle cx="-8" cy="0" r="3.6"/>
<rect x="-2.2" y="-9" width="4.4" height="18"/><rect x="-9" y="-2.2" width="18" height="4.4"/>
</g>
<!-- warp -->
<path d="M1890,796.5 H1911 C1914,796.5 1914.5,798 1914.5,800 V811 C1914.5,814 1913,815 1911,815 H1898 C1896,815 1895,818.5 1892,818.5 C1889.5,818.5 1889.5,816 1889.5,814 V800 C1889.5,798 1889,796.5 1890,796.5 Z" fill="#5c5c5c"/>
<path d="M1898,800.5 C1903,800.5 1907,801 1907,803 C1907,805 1898,804.5 1898,807 C1898,809.5 1907,809 1907,811 C1907,813 1903,813.5 1898,813.5" fill="none" stroke="#fff" stroke-width="1.4"/>
<!-- scribble -->
<path d="M1889.5,847 L1902,838.5 M1889.5,853 L1910,839 M1892,858 L1913,843.5 M1898.5,860 L1913,850" stroke="#5c5c5c" stroke-width="2.6" stroke-linecap="round"/>
<!-- grid circle -->
<circle cx="1901.4" cy="890" r="12.8" fill="#5c5c5c"/>
<path d="M1888.6,884.5 H1914.2 M1888.6,895.5 H1914.2 M1895.9,877.2 V902.8 M1906.9,877.2 V902.8" stroke="#fff" stroke-width="1.5"/>
<path d="M1906,916 L1896.5,921.5 L1906,927 Z" fill="#bdbdbd"/>
<!-- gear -->
<g transform="translate(1901.4,984.4)">
<path d="M-2.2,-11 H2.2 L2.8,-7.6 L5.6,-6.4 L8.4,-8.4 L11.2,-5.6 L9.2,-2.8 L10.4,0 L10.4,0 L13,0.8 V4.2 L9.6,5 L8.4,7.4 L10.4,10.2 L7.6,13 L4.8,11 L2.2,12 L1.6,15 H-2.6" fill="none"/>
</g>
<g transform="translate(1901.4,984.4)" fill="#2f95cf">
<circle r="8"/>
<rect x="-2.4" y="-11.2" width="4.8" height="22.4" rx="0.8"/>
<rect x="-2.4" y="-11.2" width="4.8" height="22.4" rx="0.8" transform="rotate(45)"/>
<rect x="-2.4" y="-11.2" width="4.8" height="22.4" rx="0.8" transform="rotate(90)"/>
<rect x="-2.4" y="-11.2" width="4.8" height="22.4" rx="0.8" transform="rotate(135)"/>
<circle r="3.6" fill="#fff"/>
</g>
<!-- sync -->
<g fill="none" stroke-width="2.8">
<path d="M1892,1015 A9.5,9.5 0 0 1 1899,1003" stroke="#1e6a86"/>
<path d="M1903,1003 A9.5,9.5 0 0 1 1911,1011" stroke="#3fb4e0"/>
<path d="M1909,1019 A9.5,9.5 0 0 1 1896,1021" stroke="#82cde8"/>
</g>
<g>
<path d="M1899,999.5 L1904.5,1003 L1899,1006.5 Z" fill="#3fb4e0"/>
<path d="M1912.5,1015 L1907,1017 L1909.5,1022 Z" fill="#82cde8"/>
<path d="M1888.5,1013 L1895,1012.5 L1892,1018.5 Z" fill="#1e6a86"/>
</g>
<!-- vertical scrollbar arrows -->
<path d="M1872,131.5 L1879.5,145 H1864.5 Z" fill="#9a9b9a"/>
<rect x="1862" y="993" width="19.5" height="18" fill="#3d3e3d"/>
<path d="M1872,1008.5 L1879.5,995.5 H1864.5 Z" fill="#9a9b9a"/>
<rect x="1862.8" y="453.8" width="18.6" height="99" fill="#3d3e3d"/>
<!-- horizontal scrollbar -->
<rect x="37" y="1011" width="19.5" height="19" fill="#3d3e3d"/>
<path d="M39.5,1020.5 L53,1013 V1028 Z" fill="#9a9b9a"/>
<rect x="640.5" y="1011" width="364.5" height="19" fill="#3d3e3d"/>
<rect x="1842.5" y="1011" width="19.5" height="19" fill="#3d3e3d"/>
<path d="M1859.5,1020.5 L1846,1013 V1028 Z" fill="#9a9b9a"/>
<!-- page -->
<rect x="621.5" y="241.8" width="656.8" height="656.2" fill="#fdfefd"/>
<rect x="633.2" y="245" width="641.3" height="594.8" fill="none" stroke="#cf9c9e" stroke-width="1.5"/>
<!-- feed arrow -->
<path d="M950,201.3 L968.3,219.6 H959.6 V229.6 H940.4 V219.6 H931.7 Z" fill="#000"/>
<!-- selection inner boxes -->
<g fill="none" stroke="#b9bab9" stroke-width="1">
<rect x="716.5" y="353.5" width="288.3" height="60"/>
<rect x="796.7" y="413.5" width="127.6" height="122.8"/>
<rect x="716.6" y="534.6" width="287.6" height="56"/>
</g>
<!-- glyphs -->
<path d="M 721.50,358.40 H 749.78 L 756.60,365.22 V 402.18 L 749.78,408.90 H 721.50 V 399.81 H 727.21 V 367.49 H 721.50 Z M 735.84,367.49 V 400.31 H 747.21 V 367.49 Z M 771.31,358.40 H 783.43 L 791.31,399.81 H 795.10 V 408.90 H 780.00 V 399.81 H 781.72 L 781.01,395.42 H 774.34 L 773.69,399.81 H 775.81 V 408.90 H 760.20 V 399.81 H 763.74 Z M 778.08,372.74 L 775.50,387.08 H 780.71 Z M 799.40,358.40 H 827.84 L 834.70,365.22 V 402.18 L 827.84,408.90 H 799.40 V 399.81 H 805.14 V 367.49 H 799.40 Z M 813.82,367.49 V 400.31 H 825.25 V 367.49 Z M 866.52,358.40 H 884.70 V 402.33 L 878.19,408.90 H 860.51 L 854.00,402.33 V 393.90 H 864.50 V 399.20 H 874.20 V 367.29 H 866.52 Z M 898.34,358.40 H 911.66 L 920.20,365.32 V 401.98 L 911.66,408.90 H 898.34 L 889.80,401.98 V 365.32 Z M 899.97,367.69 V 399.20 H 910.54 V 367.69 Z M 924.30,358.40 H 941.71 V 367.29 H 938.38 V 376.58 L 954.18,367.29 H 944.89 V 358.40 H 961.40 V 367.29 H 957.61 L 958.57,373.30 L 953.07,378.60 L 958.17,384.66 V 399.81 H 961.40 V 408.90 H 944.89 V 399.81 H 947.67 V 387.08 H 938.38 V 399.81 H 941.71 V 408.90 H 924.30 V 399.81 H 930.81 V 367.29 H 924.30 Z M 965.40,358.40 H 1000.30 V 371.68 H 990.40 V 367.29 H 979.09 V 378.20 H 993.58 V 386.98 H 979.09 V 400.01 H 990.40 V 395.92 H 1000.30 V 408.90 H 965.40 V 400.01 H 971.92 V 367.29 H 965.40 Z M 727.86,539.40 H 750.20 V 553.53 H 740.78 V 549.24 H 731.32 V 576.66 H 740.78 V 573.17 H 750.20 V 586.50 H 727.86 L 721.00,580.09 V 545.81 Z M 752.00,539.40 H 767.60 V 547.97 H 765.76 V 559.09 H 774.32 V 547.97 H 772.19 V 539.40 H 788.50 V 547.97 H 783.77 V 578.30 H 788.50 V 586.50 H 772.19 V 578.30 H 774.32 V 568.04 H 765.76 V 578.30 H 767.60 V 586.50 H 752.00 V 578.30 H 757.15 V 547.97 H 752.00 Z M 802.98,539.40 H 814.20 L 821.49,578.02 H 825.00 V 586.50 H 811.02 V 578.02 H 812.61 L 811.96,573.92 H 805.79 L 805.18,578.02 H 807.14 V 586.50 H 792.70 V 578.02 H 795.97 Z M 809.25,552.78 L 806.86,566.15 H 811.68 Z M 828.40,539.40 H 843.39 L 850.02,557.16 L 856.13,539.40 H 872.20 V 547.60 H 869.29 V 578.30 H 872.20 V 586.50 H 856.13 V 578.30 H 859.79 V 559.23 L 853.40,574.58 H 848.19 L 840.81,559.23 V 578.30 H 844.80 V 586.50 H 828.40 V 578.30 H 832.58 V 547.60 H 828.40 Z M 875.60,539.40 H 901.72 L 907.50,545.52 V 566.06 L 901.54,569.78 H 888.75 V 578.30 H 892.77 V 586.50 H 875.60 V 578.30 H 878.85 V 547.60 H 875.60 Z M 888.75,547.83 V 561.35 H 898.19 V 547.83 Z M 910.30,539.40 H 927.70 V 547.88 H 922.53 V 578.40 H 927.70 V 586.50 H 910.30 V 578.40 H 915.47 V 547.88 H 910.30 Z M 937.86,539.40 H 953.54 L 960.00,545.52 V 580.38 L 953.54,586.50 H 937.86 L 931.40,580.38 V 545.52 Z M 941.06,547.83 V 577.69 H 950.43 V 547.83 Z M 963.50,539.40 H 980.47 V 547.60 L 986.22,560.27 V 547.60 H 984.10 V 539.40 H 999.80 V 547.60 H 995.70 V 578.30 H 999.80 V 586.50 H 981.46 V 578.30 H 983.58 L 976.42,563.42 V 578.30 H 977.74 V 586.50 H 963.50 V 578.30 H 967.22 V 547.60 H 963.50 Z" fill="#171213" fill-rule="evenodd"/>
<!-- trophy -->
<g fill="#171213" transform="translate(795,410)">
<rect x="24" y="6.8" width="82.2" height="6.6" rx="3.3"/>
<path d="M27.8,12 H103 V45 C103,70 88,86.5 65.4,86.5 C42.8,86.5 27.8,70 27.8,45 Z"/>
<path d="M30,19.3 H9.5 C7.3,19.3 6.5,20.8 6.6,23 C7.5,48 22,73 49,77 L45,70 C30,66 16,50 14.3,27 H30 Z"/>
<path d="M101,19.3 H121.5 C123.7,19.3 124.5,20.8 124.4,23 C123.5,48 109,73 82,77 L86,70 C101,66 115,50 116.7,27 H101 Z"/>
<path d="M59,84 C60,92 59.5,98 56,101.5 L50.5,102.5 C45,103.5 41.3,110 41.3,114.6 V121.4 H90.2 V114.6 C90.2,110 86.5,103.5 81,102.5 L75.5,101.5 C72,98 71.5,92 72.5,84 Z"/>
</g>
<g fill="#fff" transform="translate(795,410)">
<path d="M66.5,21 H77.3 V57 H82.6 V65.7 H56.5 V57 H62.5 V35 L56.8,36 V30.5 Z"/>
<path d="M48.5,38.5 H63 V41.8 H48.5 Z M47.2,45 H61.5 V48.3 H47.2 Z M51.5,33 L55,33 L52,53 L48.5,53 Z M57.5,33 L61,33 L58,53 L54.5,53 Z"/>
</g>
<!-- selection handles and bounds -->
<g stroke="#7a7a7a" stroke-width="1" fill="none">
<path d="M729,349.5 H844 M877,349.5 H991.7 M729,594.5 H844 M877,594.5 H991.7 M713.5,366.5 V456 M713.5,488 V578 M1008.5,366.5 V456 M1008.5,488 V578"/>
<path d="M860.5,325.5 V342"/>
</g>
<g fill="#fff" stroke="#6a6a6a" stroke-width="1">
<rect x="709.3" y="345.4" width="8" height="8"/>
<rect x="856.5" y="345.4" width="8" height="8"/>
<rect x="1004" y="345.4" width="8" height="8"/>
<rect x="709.3" y="468.3" width="8" height="8"/>
<rect x="1004" y="468.3" width="8" height="8"/>
<rect x="709.3" y="590.3" width="8" height="8"/>
<rect x="856.5" y="590.3" width="8" height="8"/>
<rect x="1004" y="590.3" width="8" height="8"/>
</g>
<circle cx="860.5" cy="308.8" r="5" fill="#1be51b" stroke="#0d220d" stroke-width="1.2"/>
<!-- dimension lines -->
<g stroke="#8a8a8a" stroke-width="1" fill="none">
<path d="M691,358.5 H707.5 M699,359 V439 M699,506 V586 M691,586.4 H707.5"/>
<path d="M695.5,370 L699,359.5 L702.5,370 Z M695.5,575 L699,585.5 L702.5,575 Z"/>
<path d="M721.5,600 V617 M999,600 V617 M722,608.8 H825 M894,608.8 H998.5"/>
<path d="M732,605.3 L722,608.8 L732,612.3 Z M988.5,605.3 L998.5,608.8 L988.5,612.3 Z"/>
</g>
<text x="859.8" y="614.8" text-anchor="middle" font-family="Liberation Sans" font-size="15" fill="#a3a3a3">4.656 in</text>
<text transform="translate(705.5,473) rotate(-90)" x="0" y="0" text-anchor="middle" font-family="Liberation Sans" font-size="15.5" fill="#a3a3a3">3.821 in</text>
<!-- mouse cursor -->
<path d="M899.5,335.5 V351.5 L904,348 L906.8,354 L909,353 L906.3,347 L911.3,346.8 Z" fill="#fff" stroke="#000" stroke-width="1" stroke-linejoin="round"/>
<!-- taskbar -->
<rect x="60.5" y="1030" width="429.5" height="50" fill="#f0f0f0"/>
<g fill="#fff">
<path d="M20,1047 L28.7,1045.8 V1054.3 H20 Z"/><path d="M29.8,1045.6 L40.5,1044.2 V1054.3 H29.8 Z"/>
<path d="M20,1055.5 H28.7 V1064.2 L20,1063 Z"/><path d="M29.8,1055.5 H40.5 V1066 L29.8,1064.4 Z"/>
</g>
<circle cx="88.5" cy="1051.5" r="7" fill="none" stroke="#222" stroke-width="1.4"/>
<path d="M83.5,1056.5 L75.5,1064.5" stroke="#222" stroke-width="1.6"/>
<!-- task view -->
<g fill="none" stroke="#fff" stroke-width="1.3">
<rect x="510" y="1048.5" width="11" height="12"/>
<path d="M509.5,1045.5 H521.5 M509.5,1063.8 H521.5 M526.5,1045 V1064 M530,1045 V1064"/>
</g>
<rect x="525.5" y="1051" width="5.5" height="3.5" fill="#fff"/>
<!-- edge -->
<defs>
<linearGradient id="edg" x1="0" y1="0" x2="1" y2="1"><stop offset="0" stop-color="#2fc1e8"/><stop offset="0.5" stop-color="#1a8ad8"/><stop offset="1" stop-color="#0d4fa8"/></linearGradient>
<linearGradient id="edg2" x1="0" y1="0" x2="1" y2="0.6"><stop offset="0" stop-color="#2cb2ee"/><stop offset="0.5" stop-color="#22c4c8"/><stop offset="1" stop-color="#50dc58"/></linearGradient>
<linearGradient id="mail" x1="0" y1="0" x2="0" y2="1"><stop offset="0" stop-color="#1e90e8"/><stop offset="1" stop-color="#29a8f0"/></linearGradient>
</defs>
<circle cx="584.1" cy="1055" r="15" fill="#0a78d6"/>
<path d="M576,1068.5 C572,1061 575,1052.5 582,1051.5 C587,1051 590.5,1055 588.5,1060 H599 C597,1066 590.5,1070 584,1070 C581,1070 578.5,1069.5 576,1068.5 Z" fill="#0b4fab"/>
<path d="M569.2,1052.5 C570,1044 576.5,1040 584,1040 C592.5,1040 599.2,1046.5 599.2,1053.5 C599.2,1057 598.8,1059 598.5,1060.2 H590 C586.5,1059.2 585.8,1057 586.8,1055 C588.3,1050.5 583.5,1046.8 578,1047.5 C574,1048.3 571,1050.2 569.2,1052.5 Z" fill="url(#edg2)"/>
<ellipse cx="583" cy="1055.6" rx="3.9" ry="3.7" fill="#13262e"/>
<!-- explorer -->
<path d="M631,1042.5 H641 L643,1045 H660 V1066 H631 Z" fill="#f5c243"/>
<path d="M631,1048 H660 V1066 H631 Z" fill="#fcd86a"/>
<path d="M638.5,1055 H652.5 V1065 H649 V1058.5 H642 V1065 H638.5 Z" fill="#2e8ad8"/>
<!-- store -->
<path d="M692.5,1046 H722.5 V1067 C722.5,1069 721,1070 719,1070 H696 C694,1070 692.5,1069 692.5,1067 Z" fill="#f2f2f2"/>
<path d="M700,1046 V1043.5 C700,1041.5 701,1041 703,1041 H712 C714,1041 715,1041.5 715,1043.5 V1046" fill="none" stroke="#2a9bd8" stroke-width="1.8"/>
<rect x="702.5" y="1052" width="4.5" height="4.5" fill="#f25022"/><rect x="708" y="1052" width="4.5" height="4.5" fill="#7fba00"/>
<rect x="702.5" y="1057.5" width="4.5" height="4.5" fill="#00a4ef"/><rect x="708" y="1057.5" width="4.5" height="4.5" fill="#ffb900"/>
<!-- mail -->
<path d="M755,1051 L770,1041 L785,1051 V1068.8 H755 Z" fill="#0f62b8"/>
<path d="M755,1051 H785 V1068.8 H755 Z" fill="url(#mail)"/>
<path d="M755,1051 L770,1061 L785,1051 Z" fill="#e9f4fc"/>
<path d="M755,1068.8 L770,1056 L785,1068.8 Z" fill="#3cb7f5" opacity="0.7"/>
<!-- silhouette highlight -->
<rect x="802" y="1030" width="60.5" height="50" fill="#3d4e56"/>
<rect x="802" y="1076.5" width="60.5" height="3.5" fill="#72b5e8"/>
<circle cx="831.8" cy="1054.7" r="14.4" fill="#3aa9cc" stroke="#e6fbff" stroke-width="1.5"/>
<path d="M833.5,1046 C827.5,1044 820.5,1046.5 821.5,1051.5 C822.5,1056 835.5,1054.5 836.5,1059.5 C837.5,1064 831,1066 824.5,1065" fill="none" stroke="#f2fdff" stroke-width="1.9" stroke-linecap="round"/>
<path d="M830,1045.3 C832,1045 834,1045.8 835,1046.8" fill="none" stroke="#f2fdff" stroke-width="1.3"/>
<!-- chrome -->
<rect x="869" y="1076.5" width="51" height="3.5" fill="#72b5e8"/>
<circle cx="894.5" cy="1054" r="14.5" fill="#db4437"/>
<path d="M894.5,1054 L881.9,1046.75 A14.5,14.5 0 0 0 887.25,1066.56 Z" fill="#0f9d58"/>
<path d="M894.5,1054 L887.25,1066.56 A14.5,14.5 0 0 0 909,1054 Z" fill="#ffcd40"/>
<circle cx="894.5" cy="1054" r="6.2" fill="#fff"/><circle cx="894.5" cy="1054" r="4.8" fill="#4285f4"/>
<circle cx="900.5" cy="1061.5" r="9" fill="#d8d8d8" stroke="#888" stroke-width="0.6"/>
<circle cx="900.5" cy="1058.5" r="2.8" fill="#555"/><path d="M895,1066 C895.5,1062 905.5,1062 906,1066 Z" fill="#555"/>
<!-- tray -->
<path d="M1657.5,1059.5 L1665,1051.5 L1672.5,1059.5" fill="none" stroke="#fff" stroke-width="1.2"/>
<rect x="1690.5" y="1050.5" width="14" height="10" fill="none" stroke="#fff" stroke-width="1.1"/>
<rect x="1704.5" y="1053.5" width="1.5" height="4" fill="#fff"/>
<rect x="1692" y="1052" width="4" height="7" fill="#fff"/>
<path d="M1687,1048 V1052 M1689.5,1048 V1052 M1686,1052 H1690.5 V1055 L1688.2,1057 V1061" fill="none" stroke="#fff" stroke-width="1"/>
<g fill="none" stroke="#fff" stroke-width="1.2">
<path d="M1749.5,1062 A14,14 0 0 1 1763.5,1048"/>
<path d="M1753.5,1062 A10,10 0 0 1 1763.5,1052"/>
<path d="M1757.5,1062 A6,6 0 0 1 1763.5,1056"/>
</g>
<circle cx="1761.5" cy="1060.5" r="1.3" fill="#fff"/>
<path d="M1869,1045.5 H1888.5 V1061 H1876 L1872,1065 V1061 H1869 Z" fill="none" stroke="#fff" stroke-width="1.1"/>
<path d="M1882,1061.5 A3.5,3.5 0 0 0 1888.5,1059 A3,3 0 0 1 1883.5,1056.5" fill="none" stroke="#fff" stroke-width="1"/>
<rect x="1914.3" y="1030" width="1" height="50" fill="#5a6780"/>
</svg>
<div class="t" style="left:110px;top:1046px;font-size:19.5px;color:#222;transform:scaleX(0.93)">Type here to search</div>
<div class="t" style="left:1782px;top:1036px;font-size:15.5px;color:#fff;transform:scaleX(0.95)">11:31 AM</div>
<div class="t" style="left:1781px;top:1058.5px;font-size:15.5px;color:#fff">2/7/2023</div>
<div class="t" style="left:1359px;top:65px;font-size:19.5px;color:#eafcff;transform:scaleX(0.86)">DESIGN</div>
<div class="t" style="left:1521px;top:65px;font-size:19.5px;color:#aec4c9;transform:scaleX(0.86)">STORE</div>
<div class="t" style="left:1671px;top:65px;font-size:19.5px;color:#aec4c9;transform:scaleX(0.86)">LIBRARY</div>
<div class="t" style="left:1839px;top:65px;font-size:19.5px;color:#aec4c9;transform:scaleX(0.86)">SEND</div>
<div class="t" style="left:484px;top:103px;font-size:15px;color:#444">pt</div>
<div class="t lab" style="left:565px;top:103px">W</div>
<div class="t fv" style="left:586px;top:105px">0.000</div>
<div class="t lab" style="left:655px;top:103px">H</div>
<div class="t fv" style="left:672px;top:105px">0.000</div>
<div class="t lab" style="left:735px;top:102px">in</div>
<div class="t lab" style="left:841px;top:103px">X</div>
<div class="t fv" style="left:858px;top:105px">3.537</div>
<div class="t lab" style="left:928px;top:103px">Y</div>
<div class="t fv" style="left:945px;top:105px">4.915</div>
<div class="t lab" style="left:1010px;top:102px">in</div>
<div class="t" style="left:45px;top:137px;font-size:15px;color:#555">Untitled-1</div>
</body></html>
